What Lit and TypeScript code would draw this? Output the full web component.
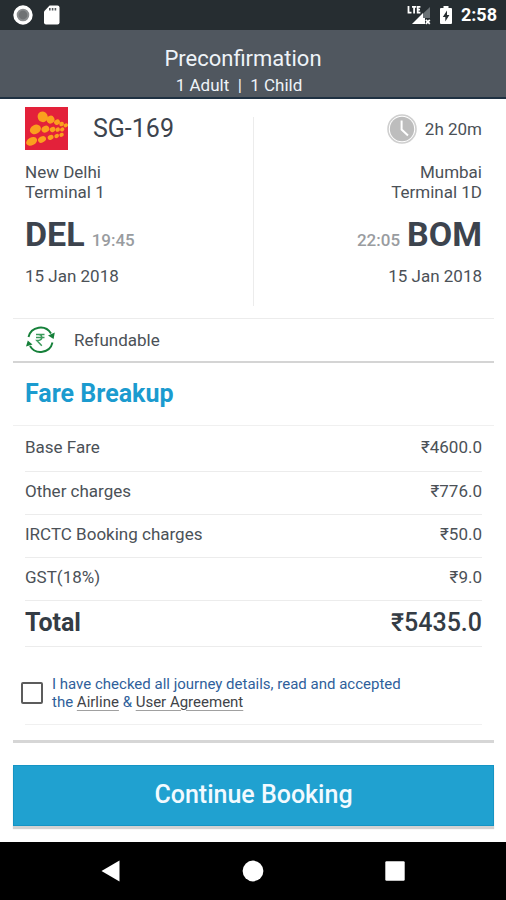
import { LitElement, html, css, svg } from "lit";
import { customElement, property } from "lit/decorators.js";

@customElement("status-bar")
class StatusBar extends LitElement {
  static styles = css`
    :host {
      display: flex;
      align-items: center;
      justify-content: space-between;
      height: 30px;
      padding: 0 9px 0 12px;
      background: #262d31;
      color: #fff;
      font-size: 18px;
      font-weight: 700;
      line-height: 30px;
    }
    .group {
      display: flex;
      align-items: center;
      gap: 9px;
    }
    svg {
      display: block;
    }
  `;

  render() {
    return html`
      <div class="group">
        <svg width="22" height="22" viewBox="0 0 22 22" aria-hidden="true">
          <circle cx="11" cy="11" r="8" fill="#8a8d8f" stroke="#fff" stroke-width="3.4" />
          <circle cx="11" cy="11" r="4.4" fill="#6f7274" />
        </svg>
        <svg width="18" height="22" viewBox="0 0 18 22" aria-hidden="true">
          <path d="M6.6 1.5H14.5a2 2 0 0 1 2 2V18.5a2 2 0 0 1-2 2H3a2 2 0 0 1-2-2V7.4Z" fill="#fff" />
          <path d="M6.8 4v2.6M9.6 4v2.6M12.4 4v2.6" stroke="#555b5e" stroke-width="1.6" />
        </svg>
      </div>
      <div class="group">
        <svg width="24" height="22" viewBox="0 0 24 22" aria-hidden="true">
          <path d="M23 3V14H18V20H5Z" fill="#697074" />
          <path d="M16 9V20H5Z M16 14h2v6h-2z" fill="#fff" />
          <path d="M1.5 2v6.600h3M5 2.800h4.200M7.1 2.800v6.600M13.400 2.800h-2.700v5.800H13.400M10.700 5.700H13" fill="none" stroke="#fff" stroke-width="1.800" />
          <path d="M18.800 15.800l4 4M22.800 15.800l-4 4" stroke="#fff" stroke-width="1.800" />
        </svg>
        <svg width="12" height="20" viewBox="0 0 12 20" aria-hidden="true">
          <path d="M3.500 1h5v2H11a1 1 0 0 1 1 1V18a1 1 0 0 1-1 1H1a1 1 0 0 1-1-1V4a1 1 0 0 1 1-1H3.500Z" fill="#fff" />
          <path d="M7 5.500 2.800 12H5.300V16.500L9.400 10H7Z" fill="#262d31" />
        </svg>
        <span>2:58</span>
      </div>
    `;
  }
}

@customElement("flight-stop")
class FlightStop extends LitElement {
  @property() city = "";
  @property() terminal = "";
  @property() code = "";
  @property() time = "";
  @property() date = "";
  @property({ type: Boolean, reflect: true }) arrival = false;

  static styles = css`
    :host {
      display: flex;
      flex-direction: column;
      align-items: flex-start;
      color: #4b5157;
      font-size: 17px;
      line-height: 20px;
    }
    :host([arrival]) {
      align-items: flex-end;
    }
    .place {
      margin-top: 12px;
    }
    .stop {
      display: flex;
      align-items: baseline;
      gap: 7px;
      margin: 12px 0 6px;
      line-height: 40px;
    }
    :host([arrival]) .stop {
      flex-direction: row-reverse;
    }
    .code {
      color: #3d444e;
      font-size: 34px;
      font-weight: 700;
    }
    .time {
      color: #999ca0;
      font-weight: 500;
    }
  `;

  render() {
    return html`
      <slot></slot>
      <div class="place">${this.city}</div>
      <div>${this.terminal}</div>
      <div class="stop">
        <span class="code">${this.code}</span>
        <span class="time">${this.time}</span>
      </div>
      <div>${this.date}</div>
    `;
  }
}

const logoDots: [number, number, number, number][] = [
  [17.7, 9.8, 5, 5.4],
  [25.5, 12.6, 4, 3.8],
  [32, 15.2, 3, 2.6],
  [36.6, 17, 2.4, 2.2],
  [40.8, 18.4, 2.2, 1.9],
  [10.4, 22.4, 5.8, 4.5],
  [20.4, 22.2, 4, 3.3],
  [27.6, 22.5, 2.9, 2.5],
  [32.7, 22.6, 2.3, 2.1],
  [37.2, 22.4, 2.2, 2],
  [6.6, 34.4, 5.8, 3.9],
  [17, 32.4, 4.2, 3],
  [25.6, 30.4, 3, 2.4],
  [31.7, 29, 2.4, 2],
  [36.6, 27.8, 2.3, 1.9],
];

@customElement("app-root")
class AppRoot extends LitElement {
  private fares = [
    { label: "Base Fare", amount: "₹4600.0" },
    { label: "Other charges", amount: "₹776.0" },
    { label: "IRCTC Booking charges", amount: "₹50.0" },
    { label: "GST(18%)", amount: "₹9.0" },
  ];

  static styles = css`
    :host {
      display: flex;
      flex-direction: column;
      min-height: 100vh;
      background: #fff;
      color: #4b5157;
      font-family: Roboto, "Noto Sans", sans-serif;
      font-size: 17px;
      line-height: 20px;
    }
    svg {
      display: block;
    }
    header {
      padding: 14px 32px 0 12px;
      border-bottom: 2px solid #1f3142;
      background: #50575f;
      color: #eef3f8;
      text-align: center;
    }
    h1 {
      margin: 0;
      font-size: 22px;
      font-weight: 400;
      line-height: 30px;
    }
    .travellers {
      margin: 0;
      padding-right: 8px;
      font-size: 17px;
      line-height: 23px;
      white-space: pre;
    }
    main {
      flex: 1;
      padding: 0 12px 0 13px;
    }
    .route {
      display: grid;
      grid-template-columns: 1fr 1px 1fr;
      padding: 8px 12px 12px;
    }
    .divider {
      margin-top: 10px;
      background: #ececec;
    }
    flight-stop {
      padding-bottom: 20px;
    }
    .flight {
      display: flex;
      align-items: center;
      gap: 25px;
      height: 43px;
      color: #3d444e;
      font-size: 25px;
    }
    .duration {
      display: flex;
      align-items: center;
      gap: 8px;
      height: 43px;
    }
    .refund {
      display: flex;
      align-items: center;
      gap: 18px;
      height: 42px;
      padding: 0 12px;
      border-top: 1px solid #ececec;
      border-bottom: 2px solid #d4d4d4;
    }
    h2 {
      margin: 0;
      padding: 0 12px;
      border-bottom: 1px solid #f0f0f0;
      color: #1b9bcf;
      font-size: 25px;
      font-weight: 700;
      line-height: 62px;
    }
    .breakup {
      padding: 0 12px 15px;
      border-bottom: 3px solid #d6d6d6;
    }
    table {
      width: 100%;
      border-collapse: collapse;
    }
    th,
    td {
      height: 42px;
      padding: 0;
      border-bottom: 1px solid #ececec;
      font-weight: 400;
      text-align: left;
    }
    td {
      text-align: right;
    }
    tbody th,
    tbody td {
      box-sizing: border-box;
      height: 43px;
      padding-bottom: 3px;
    }
    tr:first-child th {
      height: 45px;
    }
    tfoot th,
    tfoot td {
      height: 45px;
      color: #343c45;
      font-size: 25px;
      font-weight: 500;
    }
    tfoot th {
      font-weight: 700;
    }
    .accept {
      display: flex;
      align-items: center;
      gap: 9px;
      margin-left: -4px;
      padding: 28px 0 13px;
      color: #2f5f9b;
      font-size: 15px;
      line-height: 18px;
    }
    .terms {
      border-bottom: 1px solid #f0f0f0;
    }
    .accept input {
      appearance: none;
      flex: none;
      width: 22px;
      height: 22px;
      margin: 0;
      border: 2px solid #5c5c5c;
      border-radius: 2px;
      background: #fff;
    }
    .accept input:checked {
      background: #20a1d0;
    }
    .accept a {
      color: #3f4348;
      text-decoration: underline;
      text-decoration-color: #a0a0a0;
      text-underline-offset: 3px;
    }
    .continue {
      display: block;
      width: 100%;
      height: 61px;
      margin: 22px 0 16px;
      padding: 0;
      border: 1px solid #1594c4;
      box-shadow: 0 3px 1px #d2d2d2;
      background: #20a1d0;
      color: #f2faff;
      font: 500 25px/30px Roboto, "Noto Sans", sans-serif;
    }
    nav {
      display: grid;
      grid-template-columns: repeat(3, 28%);
      justify-content: center;
      height: 59px;
      background: #000;
    }
    nav button {
      display: flex;
      align-items: center;
      justify-content: center;
      padding: 0;
      border: 0;
      background: none;
    }
  `;

  render() {
    return html`
      <status-bar></status-bar>
      <header>
        <h1>Preconfirmation</h1>
        <p class="travellers">1 Adult  |  1 Child</p>
      </header>
      <main>
        <section class="route">
          <flight-stop city="New Delhi" terminal="Terminal 1" code="DEL" time="19:45" date="15 Jan 2018">
            <div class="flight">
              <svg width="43" height="43" viewBox="0 0 43 43" role="img" aria-label="SpiceJet">
                <rect width="43" height="43" fill="#e3213a" />
                ${logoDots.map(
                  ([x, y, rx, ry]) =>
                    svg`<ellipse cx=${x} cy=${y} rx=${rx} ry=${ry} transform="rotate(-28 ${x} ${y})" fill="#fba01e" />`
                )}
              </svg>
              <span>SG-169</span>
            </div>
          </flight-stop>
          <div class="divider"></div>
          <flight-stop arrival city="Mumbai" terminal="Terminal 1D" code="BOM" time="22:05" date="15 Jan 2018">
            <div class="duration">
              <svg width="30" height="30" viewBox="0 0 30 30" aria-hidden="true">
                <circle cx="15" cy="15" r="14" fill="#fff" stroke="#cfcfcf" stroke-width="1.600" />
                <circle cx="15" cy="15" r="12.200" fill="#bdbdbd" />
                <path d="M14.600 6.500V15.500L21 21.500" fill="none" stroke="#fff" stroke-width="2" />
              </svg>
              <span>2h 20m</span>
            </div>
          </flight-stop>
        </section>
        <section class="refund">
          <svg width="31" height="30" viewBox="0 0 31 30" fill="none" stroke="#16803a" stroke-width="1.900" aria-hidden="true">
            <path d="M3.500 12A12.300 12.300 0 0 1 26 8.500" />
            <path d="M27.500 17.500A12.300 12.300 0 0 1 5 21" />
            <path d="M23 10.500 29.800 7.500 28.600 14Z M1 21.500 2.800 15.500 7.500 19.600Z" fill="#16803a" stroke="none" />
            <path d="M11 9.500H19.500M11 12.600H19.500M11.500 9.500H13.500Q16.800 9.700 16.800 12.400Q16.800 15.400 11.800 15.500L16.800 20.800" stroke="#3c9a5c" stroke-width="1.500" />
          </svg>
          <span>Refundable</span>
        </section>
        <h2>Fare Breakup</h2>
        <section class="breakup">
          <table>
            <tbody>
              ${this.fares.map(
                (fare) => html`<tr><th scope="row">${fare.label}</th><td>${fare.amount}</td></tr>`
              )}
            </tbody>
            <tfoot>
              <tr><th scope="row">Total</th><td>₹5435.0</td></tr>
            </tfoot>
          </table>
          <div class="terms">
            <div class="accept">
              <input id="accept" type="checkbox" />
              <label for="accept">
                I have checked all journey details, read and accepted<br />
                the <a href="#airline">Airline</a> &amp; <a href="#agreement">User Agreement</a>
              </label>
            </div>
          </div>
        </section>
        <button class="continue" type="button">Continue Booking</button>
      </main>
      <nav>
        <button type="button" aria-label="Back">
          <svg width="22" height="22" viewBox="0 0 22 22"><path d="M1.500 11 19.500 .5V21.500Z" fill="#fff" /></svg>
        </button>
        <button type="button" aria-label="Home">
          <svg width="22" height="22" viewBox="0 0 22 22"><circle cx="11" cy="11" r="10.400" fill="#fff" /></svg>
        </button>
        <button type="button" aria-label="Recent apps">
          <svg width="22" height="22" viewBox="0 0 22 22"><rect x="1.300" y="1.300" width="19.400" height="19.400" rx="1.200" fill="#fff" /></svg>
        </button>
      </nav>
    `;
  }
}
